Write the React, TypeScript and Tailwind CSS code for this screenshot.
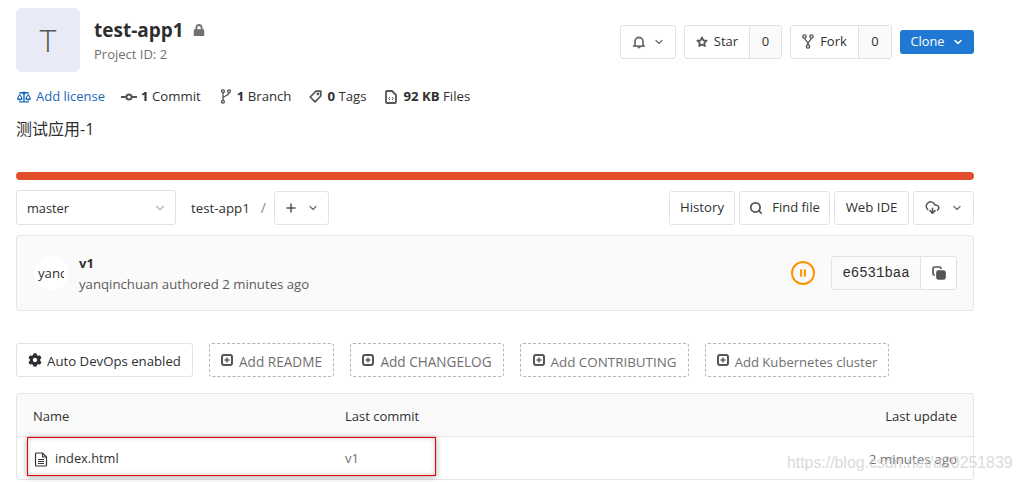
import { ChevronDown, Plus, Search, CloudDownload, Pause } from 'lucide-react';
import { FaBalanceScale, FaCog, FaLock } from 'react-icons/fa';
import { ReactNode } from 'react';

const Btn = ({ children, className = '' }: { children: ReactNode; className?: string }) => (
  <div className={`flex h-[34px] items-center rounded-[3px] border border-[#e2e2e2] bg-white text-[13.2px] text-[#303030] ${className}`}>
    {children}
  </div>
);

const PlusBox = () => (
  <svg width="12" height="12" viewBox="0 0 12 12" fill="none" className="shrink-0">
    <rect x="1" y="1" width="10" height="10" rx="2" stroke="#555" strokeWidth="2" />
    <path d="M6 3.5v5M3.5 6h5" stroke="#555" strokeWidth="1.5" />
  </svg>
);

const DashedBtn = ({ label, className = '' }: { label: string; className?: string }) => (
  <div className={`flex h-[34px] items-center justify-center gap-[6px] rounded-[3px] border border-dashed border-[#b5b5b5] text-[#707070] ${className}`}>
    <PlusBox />
    <span className="pt-[3px] leading-[20px]">{label}</span>
  </div>
);

const Stat = ({ icon, num, label, gap, className = '' }: { icon: ReactNode; num: string; label: string; gap: string; className?: string }) => (
  <div className={`flex items-center text-[13.2px] leading-[21px] text-[#303030] ${gap} ${className}`}>
    {icon}
    <span>
      <b className="font-bold">{num}</b> {label}
    </span>
  </div>
);

export default function App() {
  return (
    <div className="relative h-[482px] w-[1022px] overflow-hidden bg-white pl-[16px] pr-[48px] pt-[8px] font-['Open_Sans','Noto_Sans_CJK_SC',sans-serif]">
      <div className="flex items-start justify-between">
        <div className="flex">
          <div className="flex h-[64px] w-[64px] items-center justify-center rounded-[6px] bg-[#e8eaf6] text-[32px] font-light text-[#555]">T</div>
          <div className="ml-[14px] pt-[9px]">
            <div className="flex items-center gap-[9px]">
              <span className="text-[19px] leading-[26px] font-bold text-[#2e2e2e]">test-app1</span>
              <FaLock size={12} className="text-[#707070]" />
            </div>
            <div className="mt-[2px] text-[13px] leading-[18px] text-[#707070]">Project ID: 2</div>
          </div>
        </div>
        <div className="flex items-center pt-[16px]">
          <Btn className="mt-[1px] h-[24px] w-[56px] justify-center gap-[7px]">
            <svg width="14" height="14" viewBox="0 0 14 14" fill="none">
              <path d="M3 10V6.5a4 4 0 0 1 8 0V10l1.2 1.2H1.8L3 10z" stroke="#707070" strokeWidth="1.8" strokeLinejoin="round" />
              <path d="M5.5 12.5h3" stroke="#707070" strokeWidth="1.6" />
            </svg>
            <ChevronDown size={12} strokeWidth={2.5} className="text-[#707070]" />
          </Btn>
          <Btn className="ml-[8px] h-[24px]">
            <div className="flex h-full w-[64px] items-center justify-center gap-[6px] text-[13px]">
              <svg width="12" height="12" viewBox="0 0 12 12" fill="none">
                <path d="M6 1.3l1.4 3 3.2.4-2.3 2.2.6 3.2L6 8.500l-2.900 1.600.6-3.200L1.400 4.700l3.200-.4L6 1.300z" stroke="#555" strokeWidth="1.7" strokeLinejoin="round" />
              </svg>
              Star
            </div>
            <div className="flex h-full w-[32px] items-center justify-center rounded-r-[3px] border-l border-[#e2e2e2] bg-[#fafafa] text-[13px]">0</div>
          </Btn>
          <Btn className="ml-[8px] h-[24px]">
            <div className="flex h-full w-[67px] items-center justify-center gap-[6px] text-[13px]">
              <svg width="12" height="15" viewBox="0 0 12 15" fill="none" stroke="#555" strokeWidth="1.4">
                <circle cx="2.500" cy="2.500" r="1.600" />
                <circle cx="9.500" cy="2.500" r="1.600" />
                <circle cx="6" cy="12.500" r="1.600" />
                <path d="M2.800 4.200c.2 2.400 3.200 2.800 3.200 6.600M9.200 4.200c-.2 2.400-3.200 2.800-3.200 6.600" />
              </svg>
              Fork
            </div>
            <div className="flex h-full w-[33px] items-center justify-center rounded-r-[3px] border-l border-[#e2e2e2] bg-[#fafafa] text-[13px]">0</div>
          </Btn>
          <div className="ml-[8px] flex h-[24px] w-[74px] items-center justify-center gap-[7px] rounded-[3px] bg-[#1f78d1] text-[12.8px] text-white">
            Clone <ChevronDown size={12} strokeWidth={3} />
          </div>
        </div>
      </div>

      <div className="mt-[14px] flex items-center">
        <div className="flex items-center gap-[5px] text-[13px] leading-[21px] text-[#1b69b6]">
          <FaBalanceScale size={14} className="ml-[1px]" />
          <span>Add license</span>
        </div>
        <Stat
          gap="gap-[4px]"
          className="ml-[16px]"
          icon={
            <svg width="16" height="16" viewBox="0 0 16 16" fill="none" stroke="#555" strokeWidth="2">
              <circle cx="8" cy="8" r="2.600" />
              <path d="M0 8h5.400M10.600 8H16" />
            </svg>
          }
          num="1"
          label="Commit"
        />
        <Stat
          gap="gap-[6px]"
          className="ml-[20px]"
          icon={
            <svg width="10" height="15" viewBox="0 0 10 15" fill="none" stroke="#555" strokeWidth="1.300">
              <circle cx="2" cy="2.200" r="1.400" />
              <circle cx="2" cy="12.800" r="1.400" />
              <circle cx="8" cy="2.200" r="1.400" />
              <path d="M2 3.700v7.600M8 3.700C8 7 2 6.500 2 9.500" />
            </svg>
          }
          num="1"
          label="Branch"
        />
        <Stat
          gap="gap-[5px]"
          className="ml-[18px]"
          icon={
            <svg width="13" height="13" viewBox="0 0 13 13" fill="none" stroke="#555" strokeWidth="1.700" strokeLinejoin="round">
              <path d="M7 1.200h4.800V6L6 11.800 1.200 7 7 1.200z" />
              <circle cx="9" cy="4" r=".6" />
            </svg>
          }
          num="0"
          label="Tags"
        />
        <Stat
          gap="gap-[6px]"
          className="ml-[19px]"
          icon={
            <svg width="12" height="14" viewBox="0 0 12 14" fill="none" stroke="#555">
              <path d="M2 1h5l4 4v7a1 1 0 0 1-1 1H2a1 1 0 0 1-1-1V2a1 1 0 0 1 1-1z" strokeWidth="1.800" strokeLinejoin="round" />
              <path d="M5 7L3.700 8.500 5 10M7 7l1.300 1.500L7 10" strokeWidth="1" />
            </svg>
          }
          num="92 KB"
          label="Files"
        />
      </div>

      <div className="mt-[12px] text-[16px] leading-[20px] text-[#2e2e2e]">测试应用-1</div>

      <div className="mt-[33px] h-[8px] rounded-[4px] bg-[#e24e29]" />

      <div className="mt-[10px] flex items-center">
        <div className="flex h-[35px] w-[160px] items-center justify-between rounded-[3px] border border-[#e2e2e2] pl-[10px] pr-[8px] text-[12.8px] text-[#303030]">
          <span className="pt-[2px]">master</span>
          <ChevronDown size={14} className="text-[#b5b5b5]" />
        </div>
        <span className="ml-[15px] pt-[2px] text-[13.3px] text-[#303030]">test-app1</span>
        <span className="ml-[11px] text-[14px] text-[#888]">/</span>
        <Btn className="ml-[8px] w-[55px] justify-center gap-[9px]">
          <Plus size={14} strokeWidth={2.6} className="text-[#555]" />
          <ChevronDown size={12} strokeWidth={2.5} className="text-[#707070]" />
        </Btn>
        <div className="ml-auto flex gap-[4px]">
          <Btn className="w-[66px] justify-center">History</Btn>
          <Btn className="w-[91px] justify-center gap-[9px] text-[13px]">
            <Search size={14} strokeWidth={3} className="text-[#555]" /> Find file
          </Btn>
          <Btn className="w-[75px] justify-center">Web IDE</Btn>
          <Btn className="w-[61px] justify-center gap-[11px]">
            <CloudDownload size={15} strokeWidth={2.4} className="text-[#555]" />
            <ChevronDown size={12} strokeWidth={2.5} className="text-[#707070]" />
          </Btn>
        </div>
      </div>

      <div className="mt-[10px] flex h-[76px] items-center rounded-[3px] border border-[#e5e5e5] bg-[#fafafa] pl-[17px] pr-[16px]">
        <div className="h-[34px] w-[35px] overflow-hidden rounded-full bg-white pl-[4px] text-[13.2px] leading-[34px] whitespace-nowrap text-[#303030]">
          <span className="block w-[26px] overflow-hidden">yanc</span>
        </div>
        <div className="ml-[10px] pt-[2px]">
          <div className="text-[13px] leading-[21px] font-bold text-[#303030]">v1</div>
          <div className="text-[13.2px] leading-[21px] text-[#5c5c5c]">yanqinchuan authored 2 minutes ago</div>
        </div>
        <div className="ml-auto flex h-[24px] w-[24px] items-center justify-center rounded-full border-2 border-[#fc9403]">
          <Pause size={10} fill="#fc9403" strokeWidth={0} className="text-[#fc9403]" />
        </div>
        <div className="ml-[16px] flex h-[34px] items-center rounded-[3px] border border-[#e2e2e2]">
          <div className="flex h-full w-[88px] items-center justify-center font-['Liberation_Mono',monospace] text-[14px] text-[#303030]">e6531baa</div>
          <div className="flex h-full w-[36px] items-center justify-center rounded-r-[3px] border-l border-[#e2e2e2] bg-white">
            <svg width="14" height="14" viewBox="0 0 14 14" fill="none" stroke="#555" strokeWidth="1.700">
              <path d="M9 3V2.500A1.500 1.500 0 0 0 7.500 1h-5A1.500 1.500 0 0 0 1 2.500v5A1.500 1.500 0 0 0 2.500 9H3" />
              <rect x="5" y="5" width="8" height="8" rx="1.500" fill="#555" />
            </svg>
          </div>
        </div>
      </div>

      <div className="mt-[32px] flex items-center gap-[16px]">
        <Btn className="w-[177px] justify-center gap-[5px]">
          <FaCog size={14} className="text-[#2e2e2e]" />
          <span className="pt-[4px]">Auto DevOps enabled</span>
        </Btn>
        <DashedBtn label="Add README" className="w-[125px] text-[13.6px]" />
        <DashedBtn label="Add CHANGELOG" className="w-[154px] text-[13.6px]" />
        <DashedBtn label="Add CONTRIBUTING" className="w-[169px] text-[13.4px]" />
        <DashedBtn label="Add Kubernetes cluster" className="w-[184px] text-[13.1px]" />
      </div>

      <div className="mt-[16px] overflow-hidden rounded-[3px] border border-[#e5e5e5] text-[13px]">
        <div className="flex h-[43px] items-center border-b border-[#e5e5e5] bg-[#fafafa] px-[16px] pt-[4px] text-[#303030]">
          <span className="w-[312px]">Name</span>
          <span>Last commit</span>
          <span className="ml-auto text-[13.1px]">Last update</span>
        </div>
        <div className="flex h-[42px] items-center px-[16px] pt-[2px]">
          <span className="flex w-[312px] items-center gap-[7px] text-[12.8px] text-[#303030]">
            <svg width="14" height="15" viewBox="0 0 14 15" fill="none" stroke="#333" className="ml-[1px] shrink-0">
              <path d="M2.500 1h6l4 4v8a1 1 0 0 1-1 1h-9a1 1 0 0 1-1-1V2a1 1 0 0 1 1-1z" strokeWidth="1.200" />
              <path d="M8.500 1v4h4M4 7.500h6M4 9.500h6M4 11.500h6" strokeWidth="1.100" />
            </svg>
            index.html
          </span>
          <span className="text-[#707070]">v1</span>
          <span className="ml-auto text-[13.4px] text-[#707070]">2 minutes ago</span>
        </div>
      </div>

      <div className="absolute left-[27px] top-[437px] h-[39px] w-[409px] border border-[#e8000b] shadow-[0_1px_6px_rgba(0,0,0,0.35),inset_0_0_5px_rgba(0,0,0,0.2)]" />
      <div className="absolute left-[787px] top-[452px] font-['Liberation_Sans',sans-serif] text-[15.85px] leading-[22px] whitespace-nowrap text-[#d0d0d0]/80">https://blog.csdn.net/a20251839</div>
    </div>
  );
}
